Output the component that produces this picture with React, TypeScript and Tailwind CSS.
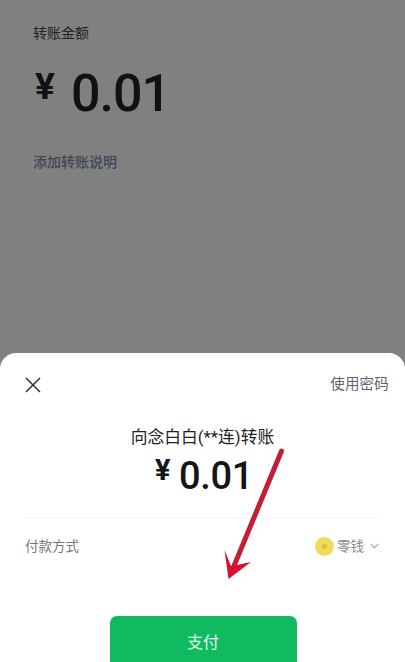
const CJK = "font-['Roboto','Noto_Sans_CJK_SC',sans-serif]";

function Arrow() {
  return (
    <svg className="absolute left-0 top-0" width="405" height="662" viewBox="0 0 405 662" fill="none">
      <path d="M281.5 451 L234 566" stroke="#c11f38" strokeWidth="5" strokeLinecap="round" />
      <path d="M224.5 550 L228.5 579 L251 562 L237 565 L231 566 Z" fill="#d9102f" />
    </svg>
  );
}

export default function App() {
  return (
    <div className={`relative flex h-[662px] w-[405px] flex-col overflow-hidden bg-[#808080] ${CJK}`}>
      {/* dimmed page behind the sheet */}
      <div className="h-[353px] shrink-0 pl-[33px] pt-[23px]">
        <div className="text-[14px] leading-[20px] text-[#222]">转账金额</div>
        <div className="mt-[18px] flex h-[60px] items-start text-[#111]">
          <span className="ml-[2px] mt-[4px] w-[36px] text-[37px] font-bold leading-[44px]">¥</span>
          <span className="mt-[-1px] text-[52px] font-medium leading-[68px] tracking-[-1px]">0.01</span>
        </div>
        <div className="mt-[5px] h-px w-[50px] bg-[#858585]" />
        <div className="mt-[25px] text-[14px] font-medium leading-[20px] text-[#3c4658]">添加转账说明</div>
      </div>

      {/* payment sheet */}
      <div className="flex-1 rounded-t-[16px] bg-white pl-[25px] pr-[25px]">
        <div className="flex items-center justify-between pt-[22px]">
          <svg width="16" height="16" viewBox="0 0 16 16" fill="none" stroke="#333" strokeWidth="1.5">
            <path d="M1 1 L15 15 M15 1 L1 15" />
          </svg>
          <span className="mr-[-9px] text-[14.5px] leading-[20px] tracking-[0.2px] text-[#5c6470]">使用密码</span>
        </div>

        <div className="mt-[31px] text-center text-[16.8px] leading-[22px] text-[#222]">向念白白(**连)转账</div>
        <div className="ml-[3px] mt-[6px] flex h-[46px] items-start justify-center text-[#151515]">
          <span className="w-[24px] text-[29px] font-bold leading-[32px]">¥</span>
          <span className="mt-[-3px] text-[38px] font-medium leading-[50px] tracking-[-0.4px]">0.01</span>
        </div>

        <div className="mt-[18px] h-px bg-[#f3f3f3]" />

        <div className="flex items-center justify-between pt-[17px]">
          <span className="text-[13.5px] leading-[20px] text-[#777]">付款方式</span>
          <div className="flex items-center pr-[1px]">
            <div className="flex size-[19px] items-center justify-center rounded-full bg-[#f0dc5c]">
              <div className="size-[5px] rounded-full bg-[#e0bb3a]" />
            </div>
            <span className="ml-[3px] text-[13.5px] leading-[20px] text-[#8a8a8a]">零钱</span>
            <svg className="ml-[6px]" width="9" height="6" viewBox="0 0 9 6" fill="none" stroke="#aaa" strokeWidth="1.2">
              <path d="M0.5 0.8 L4.5 4.8 L8.5 0.8" />
            </svg>
          </div>
        </div>

        <div className="ml-[1px] mt-[60px] flex justify-center">
          <button className="h-[56px] w-[187px] shrink-0 rounded-[7px] bg-[#0fba60] pb-[3px] text-[16px] text-[#e4f7ea]">
            支付
          </button>
        </div>
      </div>

      <Arrow />
    </div>
  );
}
